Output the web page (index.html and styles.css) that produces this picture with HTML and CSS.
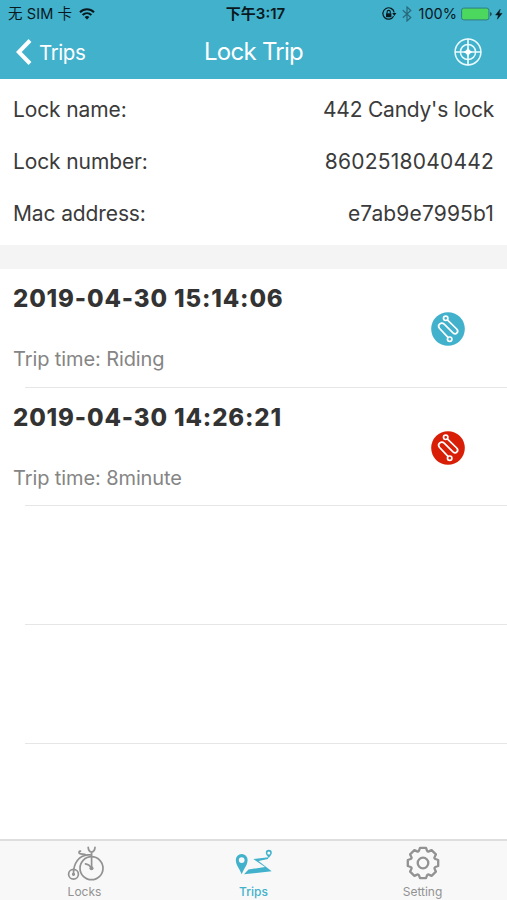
FILE: index.html
```
<!DOCTYPE html>
<html lang="en">
<head>
<meta charset="utf-8">
<title>Lock Trip</title>
<link rel="stylesheet" href="styles.css">
</head>
<body>
<div class="app">
  <header class="header">
    <div class="status">
      <div class="status-left"><span class="carrier">无 SIM 卡</span>
        <svg class="wifi" width="16" height="12" viewBox="0 0 16 12"><g fill="none" stroke="#09191e" stroke-width="2"><path d="M1 4.200C5 .2 11 .2 15 4.200"/><path d="M3.600 7c2.600-2.500 6.200-2.500 8.800 0"/></g><path d="M5.600 8.900c1.400-1.300 3.400-1.300 4.800 0L8 11.400z" fill="#09191e"/></svg>
      </div>
      <div class="clock">下午3:17</div>
      <div class="status-right">
        <svg width="15" height="14" viewBox="0 0 15 14"><path d="M11.600 9.200A5.700 5.700 0 1 1 12.200 5.500" fill="none" stroke="#09191e" stroke-width="1.200"/><path d="M10.200 6h4.200l-2.100 3z" fill="#09191e"/><path d="M4 6.300h5.400v3.900H4z" fill="#09191e"/><path d="M5.100 6.500V5a1.600 1.600 0 0 1 3.200 0v1.500" fill="none" stroke="#09191e" stroke-width="1.100"/></svg>
        <svg class="bluetooth" width="10" height="16" viewBox="0 0 10 16"><path d="M.8 4.300l8 7.200L5 15V1l3.800 3.500-8 7.200" fill="none" stroke="#28697a" stroke-width="1.200"/></svg>
        <span class="percent">100%</span>
        <svg width="42" height="14" viewBox="0 0 42 14"><rect x=".6" y="1.100" width="27.300" height="11.800" rx="2.200" fill="#4cd75e" stroke="#317e80"/><path d="M29.200 5v4.200q1.500-.6 1.500-2.100T29.200 5z" fill="#153b45"/><path d="M39.200 2.300L34.600 8h2.800l-1 4.200L41 6.400h-2.900z" fill="#09191e" stroke="#09191e" stroke-width=".5"/></svg>
      </div>
    </div>
    <nav class="nav">
      <a class="back"><svg width="16" height="26" viewBox="0 0 16 26"><path d="M14 1.500L2.800 13 14 24.500" fill="none" stroke="#fff" stroke-width="4"/></svg><span class="back-text">Trips</span></a>
      <h1 class="title">Lock Trip</h1>
      <svg class="target" width="28" height="28" viewBox="0 0 28 28"><g fill="none" stroke="#e9fbff" stroke-width="1.500"><circle cx="14" cy="14" r="12.900"/><circle cx="14" cy="14" r="7.600"/><path d="M14 .8v26.400M.8 14h26.400" stroke-width="1.700"/></g><path d="M14 9.600l1.800 2.600 2.600 1.800-2.600 1.800-1.800 2.600-1.800-2.600L9.600 14l2.600-1.800z" fill="#fff"/></svg>
    </nav>
  </header>
  <section class="info">
    <div class="info-row"><span class="label">Lock name:</span><span class="owner">442 Candy's lock</span></div>
    <div class="info-row"><span class="label">Lock number:</span><span class="number">8602518040442</span></div>
    <div class="info-row"><span class="label">Mac address:</span><span class="mac">e7ab9e7995b1</span></div>
  </section>
  <main class="list">
    <article class="trip">
      <div><h2 class="date">2019-04-30 15:14:06</h2><p class="time">Trip time: Riding</p></div>
      <svg class="route" width="34" height="34" viewBox="0 0 34 34"><circle cx="17" cy="17" r="16.800" fill="#41b1cc"/><g fill="none" stroke="#fff" stroke-width="1.700"><circle cx="14.700" cy="6.300" r="2.200"/><circle cx="18.700" cy="27.200" r="2.200"/><path d="M16.300 7.900L25.700 17C28.300 19.800 24.900 23.400 22 20.800L13.200 12.100C10.300 9.400 5.900 12.900 8.400 16.300L17.200 25.600"/></g></svg>
    </article>
    <article class="trip">
      <div><h2 class="date">2019-04-30 14:26:21</h2><p class="time">Trip time: 8minute</p></div>
      <svg class="route" width="34" height="34" viewBox="0 0 34 34"><circle cx="17" cy="17" r="16.800" fill="#d81e06"/><g fill="none" stroke="#fff" stroke-width="1.700"><circle cx="14.700" cy="6.300" r="2.200"/><circle cx="18.700" cy="27.200" r="2.200"/><path d="M16.300 7.900L25.700 17C28.300 19.800 24.900 23.400 22 20.800L13.200 12.100C10.300 9.400 5.900 12.900 8.400 16.300L17.200 25.600"/></g></svg>
    </article>
    <div class="trip"></div>
    <div class="trip"></div>
  </main>
  <footer class="tabs">
    <a class="tab">
      <svg width="38" height="36" viewBox="0 0 38 36"><g fill="none" stroke="#929292" stroke-width="1.700" stroke-linecap="round"><circle cx="25.500" cy="23.200" r="11.500"/><circle cx="7.500" cy="29.300" r="4.900"/><circle cx="7.500" cy="29.300" r=".8"/><path d="M7.500 28.500C7.500 18 13 10.300 22 9.800H25.600M25.600 22V7M22.200 2.400c.2 2.800 1.500 4.400 3.400 4.600 1.900-.2 3.200-1.800 3.400-4.600M20 9.900c-2-1.500-4.500-.2-6.300-1.300-1.300-1-.8-2.600.8-2.500M19.500 18.900l3.200 1.100 2.800 3"/></g><circle cx="25.500" cy="23.200" r="2" fill="#929292"/></svg>
      <span>Locks</span>
    </a>
    <a class="tab active">
      <svg width="38" height="36" viewBox="0 0 38 36"><g fill="#41b1cc"><path fill-rule="evenodd" d="M6.700 9A5.900 5.900 0 0 0 .8 15c0 5 4 9.200 5.900 14.300 1.900-5.100 5.900-9.300 5.900-14.300a5.900 5.900 0 0 0-5.900-6zm0 3.200a2.900 2.900 0 1 1 0 5.800 2.900 2.900 0 0 1 0-5.800z"/><path fill-rule="evenodd" d="M33.800 4.800A3 3 0 0 0 30.800 7.900c0 2 2 3 3 5 1-2 3-3 3-5a3 3 0 0 0-3-3.100zm0 1.600a1.500 1.500 0 1 1 0 3 1.500 1.500 0 0 1 0-3z"/><path d="M33.500 12.200L18.300 14 30 22 13.500 24.500 9 29.300 36.700 26.300 23.500 16.100 33 14z"/></g></svg>
      <span>Trips</span>
    </a>
    <a class="tab">
      <svg width="38" height="36" viewBox="-19 -18 38 36"><g fill="none" stroke="#929292" stroke-width="2.300" stroke-linejoin="round"><path d="M15.200-3V3L12.400 4Q11 5 11.600 5.900L12.900 8.600 8.600 12.900 5.900 11.600Q4.800 11 4 12.400L3 15.200H-3L-4 12.400Q-4.800 11-5.900 11.600L-8.600 12.900-12.900 8.600-11.600 5.900Q-11 4.800-12.400 4L-15.200 3V-3L-12.400-4Q-11-4.800-11.600-5.900L-12.900-8.600-8.600-12.900-5.900-11.600Q-4.800-11-4-12.400L-3-15.200H3L4-12.400Q4.800-11 5.900-11.600L8.600-12.900 12.900-8.600 11.600-5.900Q11-4.800 12.400-4Z"/><circle r="5.300"/></g></svg>
      <span>Setting</span>
    </a>
  </footer>
</div>
</body>
</html>
```
FILE: styles.css
```
* { box-sizing: border-box; }
body { margin: 0; background: #fff; font-family: Inter, "Noto Sans CJK SC", sans-serif; }
svg { display: block; flex: none; }
h1, h2, p { margin: 0; font-weight: 400; }
.app { width: 507px; height: 900px; display: flex; flex-direction: column; overflow: hidden; }
.header { height: 79px; background: #41b1cc; flex: none; }
.status { height: 27px; display: grid; grid-template-columns: 1fr auto 1fr; align-items: center; color: #09191e; font-size: 14.5px; line-height: 20px; padding: 0 4px 0 8px; }
.status-left, .status-right { display: flex; align-items: center; }
.status-left { gap: 7px; }
.status-right { justify-content: flex-end; }
.carrier { letter-spacing: .1px; }
.bluetooth { margin: 0 7px 0 5px; }
.percent { margin-right: 4px; }
.clock { font-weight: 600; font-size: 15px; }
.nav { height: 52px; display: grid; grid-template-columns: 1fr auto 1fr; align-items: center; padding: 0 16px 3px; color: #fff; }
.back { display: flex; align-items: center; gap: 7px; font-size: 20.5px; letter-spacing: -.4px; }
.back-text { position: relative; top: 1px; }
.title { font-size: 24px; line-height: 30px; letter-spacing: -.75px; }
.target { justify-self: end; margin-right: 9px; }
.info { height: 190px; flex: none; padding: 5px 13px 0; border-bottom: 24px solid #f4f4f4; color: #3b3b3b; }
.info-row { height: 51.7px; display: flex; align-items: center; justify-content: space-between; font-size: 21px; }
.label { letter-spacing: -.12px; }
.owner { letter-spacing: -.23px; }
.number { letter-spacing: .22px; }
.mac { letter-spacing: .15px; }
.list { flex: 1; }
.trip { height: 118.7px; display: flex; justify-content: space-between; padding: 16px 42.5px 0 13px; background: linear-gradient(#e6e6e6, #e6e6e6) 25px 100% / 100% 1px no-repeat; }
.date { font-size: 24px; line-height: 28px; font-weight: 800; letter-spacing: .85px; color: #333; }
.time { margin-top: 34px; font-size: 20px; line-height: 24px; letter-spacing: -.1px; color: #858585; }
.route { margin-top: 27px; }
.tabs { height: 61px; flex: none; display: flex; justify-content: space-between; background: #f8f8f8; border-top: 2px solid #dedede; }
.tab { width: 169px; display: flex; flex-direction: column; align-items: center; padding-top: 4px; color: #929292; font-size: 12px; line-height: 16px; gap: 3px; }
.active { color: #41b1cc; font-weight: 500; }
```
